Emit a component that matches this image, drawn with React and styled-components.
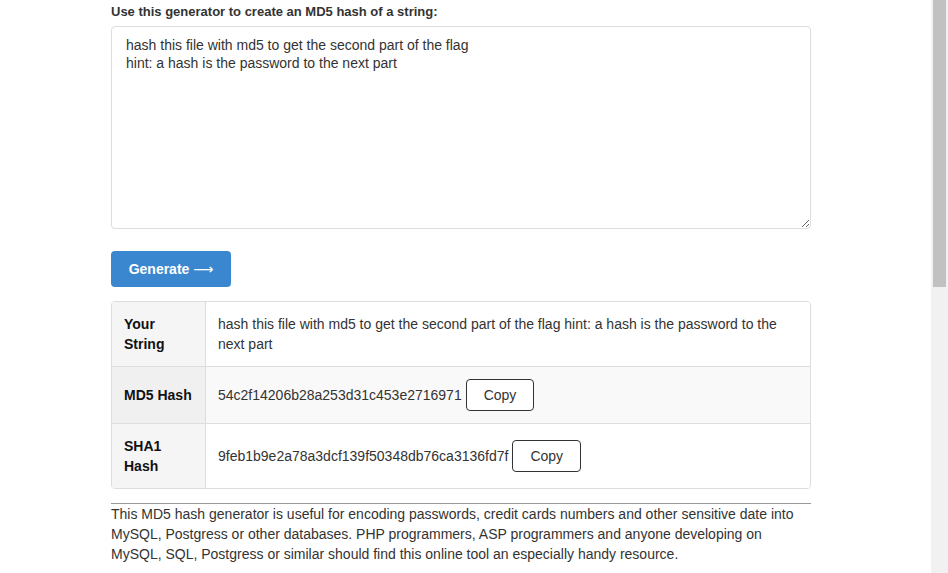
import styled, { createGlobalStyle } from "styled-components";

const Global = createGlobalStyle`
  html, body {
    margin: 0;
    padding: 0;
    height: 100%;
    overflow: hidden;
    background: #fff;
  }
  body {
    font-family: "Liberation Sans", Arial, sans-serif;
    font-size: 14px;
    color: #333;
  }
`;

const Page = styled.div`
  display: flex;
  height: 573px;
`;

const Main = styled.main`
  flex: 1;
  padding-left: 111px;
`;

const Column = styled.div`
  width: 700px;
`;

const Label = styled.label`
  display: block;
  font-weight: bold;
  font-size: 13px;
  line-height: 18px;
  color: #333;
  padding-top: 3px;
  margin-bottom: 5px;
`;

const TextArea = styled.textarea`
  display: block;
  box-sizing: border-box;
  width: 700px;
  height: 203px;
  padding: 9px 14px;
  border: 1px solid #ddd;
  border-radius: 4px;
  font-family: "Liberation Sans", Arial, sans-serif;
  font-size: 14px;
  line-height: 18px;
  color: #333;
  outline: none;
`;

const Generate = styled.button`
  display: block;
  margin-top: 22px;
  width: 120px;
  height: 36px;
  border: none;
  border-radius: 4px;
  background: #3a87d0;
  color: #fff;
  font-family: "Liberation Sans", Arial, sans-serif;
  font-weight: bold;
  font-size: 14px;
`;

const Arrow = styled.span`
  font-family: "DejaVu Sans", sans-serif;
  font-weight: normal;
  font-size: 14px;
`;

const Table = styled.div`
  margin-top: 14px;
  border: 1px solid #ddd;
  border-radius: 4px;
  overflow: hidden;
`;

const Row = styled.div`
  display: flex;
  border-top: ${(p) => (p.$first ? "none" : "1px solid #ddd")};
  background: ${(p) => (p.$striped ? "#f9f9f9" : "#fff")};
`;

const Head = styled.div`
  box-sizing: border-box;
  width: 94px;
  flex: none;
  padding: 12px;
  border-right: 1px solid #ddd;
  background: ${(p) => (p.$striped ? "#f0f0f0" : "#f5f5f5")};
  font-weight: bold;
  color: #111;
  line-height: 20px;
  display: flex;
  align-items: center;
`;

const Cell = styled.div`
  flex: 1;
  padding: 12px 12px;
  line-height: 20px;
  color: #333;
  display: flex;
  align-items: center;
`;

const CopyButton = styled.button`
  margin-left: 4px;
  padding: 5px 17px;
  border: 1px solid #333;
  border-radius: 4px;
  background: #fff;
  color: #333;
  font-family: "Liberation Sans", Arial, sans-serif;
  font-size: 14px;
  line-height: 20px;
`;

const Rule = styled.hr`
  margin: 14px 0 0;
  border: none;
  border-top: 1px solid #999;
`;

const Para = styled.p`
  margin: 0;
  line-height: 20px;
  color: #333;
`;

const Track = styled.aside`
  width: 17px;
  flex: none;
  background: #f1f1f1;
  display: flex;
  justify-content: center;
`;

const Thumb = styled.div`
  width: 13px;
  height: 287px;
  background: #c1c1c1;
`;

const text = "hash this file with md5 to get the second part of the flag\nhint: a hash is the password to the next part";

const App = () => {
  return (
    <Page>
      <Global />
      <Main>
        <Column>
          <Label>Use this generator to create an MD5 hash of a string:</Label>
          <TextArea defaultValue={text} />
          <Generate>Generate <Arrow>⟶</Arrow></Generate>
          <Table>
            <Row $first>
              <Head>Your String</Head>
              <Cell>hash this file with md5 to get the second part of the flag hint: a hash is the password to the next part</Cell>
            </Row>
            <Row $striped>
              <Head $striped>MD5 Hash</Head>
              <Cell>
                54c2f14206b28a253d31c453e2716971
                <CopyButton>Copy</CopyButton>
              </Cell>
            </Row>
            <Row>
              <Head>SHA1 Hash</Head>
              <Cell>
                9feb1b9e2a78a3dcf139f50348db76ca3136fd7f
                <CopyButton>Copy</CopyButton>
              </Cell>
            </Row>
          </Table>
          <Rule />
          <Para>
            This MD5 hash generator is useful for encoding passwords, credit cards numbers and other sensitive date into MySQL, Postgress or other databases. PHP programmers, ASP programmers and anyone developing on MySQL, SQL, Postgress or similar should find this online tool an especially handy resource.
          </Para>
        </Column>
      </Main>
      <Track>
        <Thumb />
      </Track>
    </Page>
  );
};

export default App;
